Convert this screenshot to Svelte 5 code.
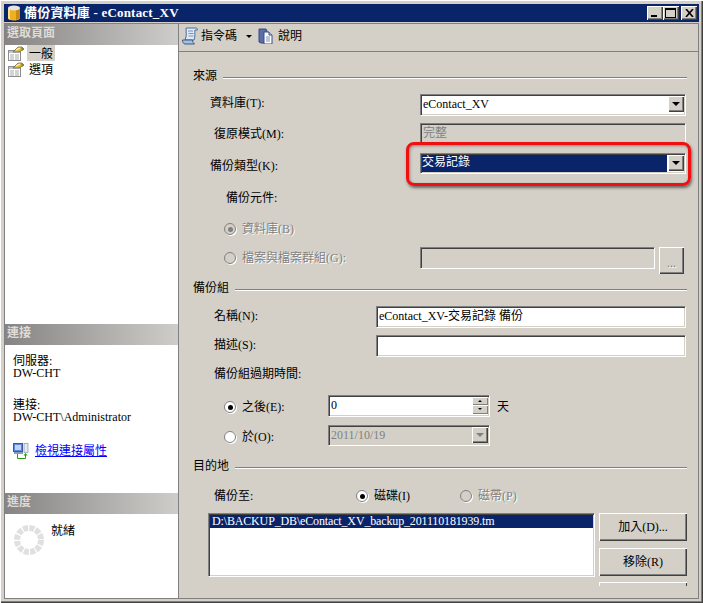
{#snippet radio(checked)}
  <span class="radio" class:checked></span>
{/snippet}

{#snippet arrow()}
  <span class="drop"><i></i></span>
{/snippet}

{#snippet pageIcon()}
  <svg width="16" height="16" viewBox="0 -1 16 16">
    <rect x="0.5" y="4.5" width="12" height="10" fill="#fff" stroke="#8c8c8c" />
    <path d="M1 5h11v2H1z" fill="#b8c4d8" />
    <path d="M2 9h4M7 9h4M2 11h4M7 11h4M2 13h4M7 13h4" stroke="#a8a8a8" />
    <path d="M5 6 10 1l4 0 2 2-5 3z" fill="#e8b830" stroke="#6b6a30" stroke-width="0.7" />
    <path d="M8 4l4-2" stroke="#fff" />
    <path d="M13 1l3 2-2 2z" fill="#6a8a30" />
  </svg>
{/snippet}

<div class="window">
  <div class="titlebar">
    <svg width="12" height="16" viewBox="0 0 12 16">
      <path d="M0 3v10c0 1.500 2.500 2.500 6 2.500s6-1 6-2.500V3z" fill="#f0b020" />
      <path d="M8 3v12.300l4-2.300V3z" fill="#c88a10" />
      <path d="M0 3v10c0 .8.800 1.400 2 1.800V3z" fill="#fde08a" />
      <ellipse cx="6" cy="3" rx="6" ry="2.400" fill="#e4e4e4" />
    </svg>
    <span class="title-text">備份資料庫 - eContact_XV</span>
    <div class="caption-btns">
      <button class="cap" aria-label="min"><i class="min"></i></button>
      <button class="cap" aria-label="max"><i class="max"></i></button>
      <button class="cap close" aria-label="close">
        <svg width="9" height="8" viewBox="0 0 9 8"><path d="M1 0l7 8M8 0 1 8" stroke="#000" stroke-width="1.600" fill="none" /></svg>
      </button>
    </div>
  </div>

  <div class="body">
    <aside class="side">
      <div class="side-head">選取頁面</div>
      <div class="pages">
        <div class="page">{@render pageIcon()}<span class="sel">一般</span></div>
        <div class="page">{@render pageIcon()}<span>選項</span></div>
      </div>

      <div class="side-head">連接</div>
      <div class="conn">
        <div class="pair">
          <div>伺服器:</div>
          <div>DW-CHT</div>
        </div>
        <div class="pair">
          <div>連接:</div>
          <div>DW-CHT\Administrator</div>
        </div>
        <div class="link-row">
          <svg width="16" height="16" viewBox="0 0 16 16">
            <rect x="0.500" y="0.500" width="9" height="8" fill="#5a8ae0" stroke="#3a5aa0" />
            <rect x="2" y="2" width="6" height="5" fill="#bcd4f8" />
            <rect x="1" y="9" width="9" height="2" fill="#8a9ab8" />
            <rect x="11" y="0.500" width="4" height="9" fill="#e4e8f0" stroke="#8a94a8" stroke-width="0.700" />
            <path d="M4.500 11v4.500h8V12" fill="none" stroke="#2a9a10" />
            <path d="M10.500 12.500l2-2.500 2 2.500z" fill="#2a9a10" />
          </svg>
          <a href="#top">檢視連接屬性</a>
        </div>
      </div>

      <div class="side-head">進度</div>
      <div class="progress">
        <svg width="30" height="30" viewBox="0 0 30 30">
          <circle cx="15" cy="15" r="12" fill="none" stroke="#e0e0e0" stroke-width="6" stroke-dasharray="5 1.283" />
        </svg>
        <span>就緒</span>
      </div>
    </aside>

    <main class="main">
      <div class="toolbar">
        <svg width="16" height="18" viewBox="0 0 16 18">
          <path d="M4 1h10c1 0 2 1 1.500 2H13c-.5 3 .5 6-1 10H3C5 9 4 5 4 1z" fill="#dfe8f6" stroke="#4a6c9c" />
          <path d="M.5 13h10c0 2 1 3 2 4H3c-1.500 0-2.500-2-2.500-4z" fill="#a8c0e0" stroke="#3a5a88" />
          <path d="M6 4h5M6.500 6.500h5M6.500 9h5" stroke="#7a94b8" />
        </svg>
        <span class="tool">指令碼</span>
        <i class="tool-caret"></i>
        <svg width="16" height="16" viewBox="0 0 16 16">
          <path d="M1 1h7l1 2v12H3l-2-1z" fill="#5a6ea8" stroke="#3a4a80" />
          <path d="M6 4h5l3 3v9H6z" fill="#fff" stroke="#3a4a80" />
          <path d="M11 4v3h3" fill="#c8d0e4" stroke="#3a4a80" />
          <path d="M8 9h4M8 11h4M8 13h4" stroke="#7a8ab8" />
        </svg>
        <span class="tool help">說明</span>
      </div>

      <div class="form">
        <div class="section">來源</div>

        <div class="row wide h1">
          <span class="label l-db">資料庫(T):</span>
          <div class="field combo w-main">
            <span class="value">eContact_XV</span>
            {@render arrow()}
          </div>
        </div>
        <div class="row wide h2">
          <span class="label l-rec">復原模式(M):</span>
          <div class="field off w-main"><span class="value gray">完整</span></div>
        </div>
        <div class="row wide h3">
          <span class="label l-db">備份類型(K):</span>
          <div class="field combo w-main">
            <span class="value active">交易記錄</span>
            {@render arrow()}
            <div class="highlight"></div>
          </div>
        </div>

        <div class="row h4"><span class="label l-comp">備份元件:</span></div>
        <div class="row h5">
          <span class="choice l-opt dis">{@render radio(true)}資料庫(B)</span>
        </div>
        <div class="row wide h6">
          <span class="choice l-opt dis">{@render radio(false)}檔案與檔案群組(G):</span>
          <div class="field off w-file"></div>
          <button class="btn dots">...</button>
        </div>

        <div class="section s2">備份組</div>
        <div class="row name h7">
          <span class="label l-rec">名稱(N):</span>
          <div class="field w-name"><span class="value">eContact_XV-交易記錄 備份</span></div>
        </div>
        <div class="row name h8">
          <span class="label l-rec">描述(S):</span>
          <div class="field w-name"></div>
        </div>
        <div class="row h9"><span class="label l-rec">備份組過期時間:</span></div>
        <div class="row expire h10">
          <span class="choice l-opt">{@render radio(true)}之後(E):</span>
          <div class="field w-exp">
            <span class="value">0</span>
            <span class="spin"><b><i class="up"></i></b><b><i></i></b></span>
          </div>
          <span class="unit">天</span>
        </div>
        <div class="row expire h11">
          <span class="choice l-opt">{@render radio(false)}於(O):</span>
          <div class="field off combo w-exp">
            <span class="value gray">2011/10/19</span>
            <span class="drop dim"><i></i></span>
          </div>
        </div>

        <div class="section s3">目的地</div>
        <div class="row media h12">
          <span class="label l-rec">備份至:</span>
          <span class="choice">{@render radio(true)}磁碟(I)</span>
          <span class="choice dis">{@render radio(false)}磁帶(P)</span>
        </div>
        <div class="dest">
          <div class="listbox">
            <div class="item">D:\BACKUP_DB\eContact_XV_backup_201110181939.tm</div>
          </div>
          <div class="actions">
            <button class="btn">加入(D)...</button>
            <button class="btn">移除(R)</button>
            <div class="btn clipped"></div>
          </div>
        </div>
      </div>
    </main>
  </div>
</div>

<style>
  :global(body) {
    margin: 0;
    background: #fff;
  }
  .window {
    box-sizing: border-box;
    width: 703px;
    height: 603px;
    padding: 4px;
    background: #d4d0c8;
    box-shadow: inset 1px 1px 0 #fff, inset -1px -1px 0 #404040, inset -2px -2px 0 #808080;
    font: 12px/14px "Liberation Serif", "Noto Sans CJK TC", serif;
    color: #000;
    display: flex;
    flex-direction: column;
  }
  .titlebar {
    height: 18px;
    background: #0a246a;
    color: #fff;
    display: flex;
    align-items: center;
    padding-left: 4px;
    font-weight: 700;
    font-size: 13px;
  }
  .title-text {
    margin-left: 4px;
    letter-spacing: 0.2px;
  }
  .caption-btns {
    margin-left: auto;
    display: flex;
    padding-right: 2px;
  }
  .cap {
    width: 16px;
    height: 14px;
    padding: 0;
    border: 0;
    background: #d4d0c8;
    box-shadow: inset 1px 1px 0 #fff, inset -1px -1px 0 #404040, inset -2px -2px 0 #808080;
    display: flex;
    align-items: center;
    justify-content: center;
  }
  .close {
    margin-left: 2px;
  }
  .min {
    width: 6px;
    height: 2px;
    background: #000;
    margin-top: 6px;
    margin-right: 2px;
  }
  .max {
    width: 9px;
    height: 7px;
    border: 1px solid #000;
    border-top-width: 2px;
    margin-right: 1px;
  }
  .body {
    flex: 1;
    display: flex;
    min-height: 0;
    margin-top: 1px;
  }
  .side {
    width: 175px;
    box-sizing: border-box;
    background: #fff;
    border: 1px solid #808080;
    display: flex;
    flex-direction: column;
  }
  .side-head {
    height: 21px;
    flex: none;
    background: linear-gradient(90deg, #868484, #cfcdc9);
    color: #dfdcd6;
    font-weight: 700;
    line-height: 19px;
    padding-left: 2px;
  }
  .pages {
    height: 279px;
    padding-left: 3px;
    flex: none;
    box-sizing: border-box;
  }
  .page {
    display: flex;
    align-items: center;
    height: 16px;
    gap: 3px;
  }
  .page span {
    padding: 0 2px;
    height: 16px;
    line-height: 18px;
  }
  .sel {
    background: #d4d0c8;
  }
  .conn {
    height: 148px;
    flex: none;
    box-sizing: border-box;
    padding: 10px 8px 0;
    line-height: 12px;
  }
  .pair {
    height: 44px;
  }
  .pair div {
    height: 12px;
  }
  .link-row {
    display: flex;
    align-items: flex-start;
    gap: 6px;
  }
  .link-row a {
    color: #0000ff;
    line-height: 14px;
    padding-top: 1px;
  }
  .progress {
    display: flex;
    padding: 10px 0 0 9px;
    gap: 7px;
    align-items: flex-start;
  }
  .progress svg {
    margin-top: 1px;
  }
  .main {
    flex: 1;
    min-width: 0;
    box-sizing: border-box;
    border: 1px solid #808080;
    border-left: 0;
    display: flex;
    flex-direction: column;
    overflow: hidden;
  }
  .toolbar {
    height: 28px;
    flex: none;
    box-sizing: border-box;
    border-bottom: 1px solid #808080;
    display: flex;
    align-items: center;
    padding: 0 0 3px 3px;
  }
  .tool {
    margin-left: 3px;
  }
  .tool.help {
    margin-left: 4px;
  }
  .tool-caret {
    width: 0;
    height: 0;
    border: 3px solid transparent;
    border-top: 3px solid #000;
    border-bottom: 0;
    margin: 0 6px 0 9px;
  }
  .form {
    flex: 1;
    padding: 17px 11px 0 14px;
    overflow: hidden;
  }
  .section {
    display: flex;
    align-items: center;
    gap: 6px;
    height: 14px;
  }
  .section::after {
    content: "";
    flex: 1;
    height: 1px;
    background: #808080;
    box-shadow: 0 1px 0 #fff;
    margin-top: 3px;
  }
  .s2 { margin-top: 7px; }
  .s3 { margin-top: 14px; }
  .row {
    display: grid;
    grid-template-columns: 1fr;
    align-items: start;
  }
  .row.wide { grid-template-columns: 227px auto 1fr; }
  .row.name { grid-template-columns: 183px 1fr; }
  .row.expire { grid-template-columns: 135px auto 1fr; }
  .row.media { grid-template-columns: 163px 104px 1fr; }
  .h1 { margin-top: 11px; height: 21px; }
  .h2 { margin-top: 8px; height: 20px; }
  .h3 { margin-top: 10px; height: 20px; }
  .h4 { margin-top: 18px; height: 14px; }
  .h5 { margin-top: 17px; height: 14px; }
  .h6 { margin-top: 11px; height: 27px; }
  .h7 { margin-top: 11px; height: 21px; }
  .h8 { margin-top: 8px; height: 21px; }
  .h9 { margin-top: 11px; height: 14px; }
  .h10 { margin-top: 14px; height: 21px; }
  .h11 { margin-top: 9px; height: 20px; }
  .h12 { margin-top: 16px; height: 14px; }
  .label,
  .choice {
    white-space: nowrap;
    display: flex;
    align-items: center;
  }
  .h1 .label { margin-top: 2px; }
  .h2 .label { margin-top: 4px; }
  .h3 .label { margin-top: 6px; }
  .h7 .label,
  .h8 .label { margin-top: 3px; }
  .l-db { margin-left: 17px; }
  .l-rec { margin-left: 21px; }
  .l-comp { margin-left: 33px; }
  .l-opt { margin-left: 31px; }
  .h6 .choice { margin-top: 4px; }
  .h10 .choice,
  .h11 .choice { margin-top: 5px; }
  .dis {
    color: #808080;
    text-shadow: 1px 1px 0 #fff;
  }
  .radio {
    box-sizing: border-box;
    width: 12px;
    height: 12px;
    border-radius: 50%;
    background: #fff;
    border: 1px solid #808080;
    box-shadow: 1px 1px 0 #fff;
    margin-right: 6px;
    position: relative;
    flex: none;
  }
  .dis .radio {
    background: #d4d0c8;
  }
  .radio.checked::after {
    content: "";
    position: absolute;
    inset: 2.500px;
    border-radius: 50%;
    background: #000;
  }
  .dis .radio.checked::after {
    background: #808080;
  }
  .field {
    box-sizing: border-box;
    height: 21px;
    background: #fff;
    position: relative;
    display: flex;
    align-items: center;
    box-shadow: inset 1px 1px 0 #808080, inset 2px 2px 0 #404040, inset -1px -1px 0 #d4d0c8, 1px 1px 0 #fff;
    padding: 0 2px 1px 3px;
  }
  .off {
    background: #d4d0c8;
  }
  .value {
    white-space: nowrap;
    flex: 1;
  }
  .gray {
    color: #808080;
  }
  .active {
    background: #0a246a;
    color: #fff;
    align-self: stretch;
    line-height: 15px;
    margin: 2px 1px 0 -1px;
  }
  .w-main { width: 265px; }
  .w-file { width: 234px; }
  .w-name { width: 309px; }
  .w-exp { width: 161px; }
  .h2 .field,
  .h3 .field,
  .h11 .field { height: 20px; }
  .drop {
    width: 16px;
    height: 16px;
    background: #d4d0c8;
    box-shadow: inset 1px 1px 0 #fff, inset -1px -1px 0 #404040, inset -2px -2px 0 #808080;
    display: flex;
    align-items: center;
    justify-content: center;
    flex: none;
    margin-right: -1px;
  }
  .drop i {
    width: 0;
    height: 0;
    border: 4px solid transparent;
    border-top: 4px solid #000;
    border-bottom: 0;
  }
  .drop.dim i {
    border-top-color: #808080;
  }
  .highlight {
    position: absolute;
    left: -14px;
    top: -11px;
    width: 285px;
    height: 44px;
    box-sizing: border-box;
    border: 3px solid #f01010;
    border-radius: 8px;
    box-shadow: 1px 2px 3px rgba(0, 0, 0, 0.5), inset 1px 1px 3px rgba(0, 0, 0, 0.35);
    pointer-events: none;
  }
  .btn {
    box-sizing: border-box;
    background: #d4d0c8;
    border: 0;
    padding: 0;
    font: inherit;
    box-shadow: inset 1px 1px 0 #fff, inset -1px -1px 0 #404040, inset -2px -2px 0 #808080;
    color: #000;
  }
  .dots {
    margin-left: 5px;
    width: 25px;
    height: 27px;
    color: #808080;
    text-shadow: 1px 1px 0 #fff;
    padding-top: 5px;
  }
  .spin {
    width: 16px;
    display: flex;
    flex-direction: column;
    height: 17px;
    margin-right: -1px;
  }
  .spin b {
    flex: 1;
    background: #d4d0c8;
    box-shadow: inset 1px 1px 0 #fff, inset -1px -1px 0 #808080;
    display: flex;
    align-items: center;
    justify-content: center;
  }
  .spin i {
    width: 0;
    height: 0;
    border: 2px solid transparent;
    border-top: 2px solid #000;
    border-bottom: 0;
  }
  .spin i.up {
    border-top: 0;
    border-bottom: 2px solid #000;
  }
  .unit {
    margin: 5px 0 0 8px;
  }
  .dest {
    display: flex;
    margin: 10px 0 0 15px;
    gap: 5px;
    align-items: flex-start;
  }
  .listbox {
    width: 386px;
    height: 63px;
    box-sizing: border-box;
    background: #fff;
    padding: 2px 0 0 2px;
    box-shadow: inset 1px 1px 0 #808080, inset 2px 2px 0 #404040, inset -1px -1px 0 #d4d0c8, 1px 1px 0 #fff;
  }
  .item {
    background: #0a246a;
    color: #fff;
    height: 13px;
    line-height: 13px;
    padding-left: 2px;
    white-space: nowrap;
    margin-right: 1px;
    letter-spacing: -0.15px;
  }
  .actions {
    display: flex;
    flex-direction: column;
    gap: 7px;
  }
  .actions .btn {
    width: 88px;
    height: 28px;
  }
  .actions .clipped {
    height: 4px;
    margin-top: -1px;
    box-shadow: inset 1px 1px 0 #fff, inset -1px 0 0 #404040;
  }
</style>
